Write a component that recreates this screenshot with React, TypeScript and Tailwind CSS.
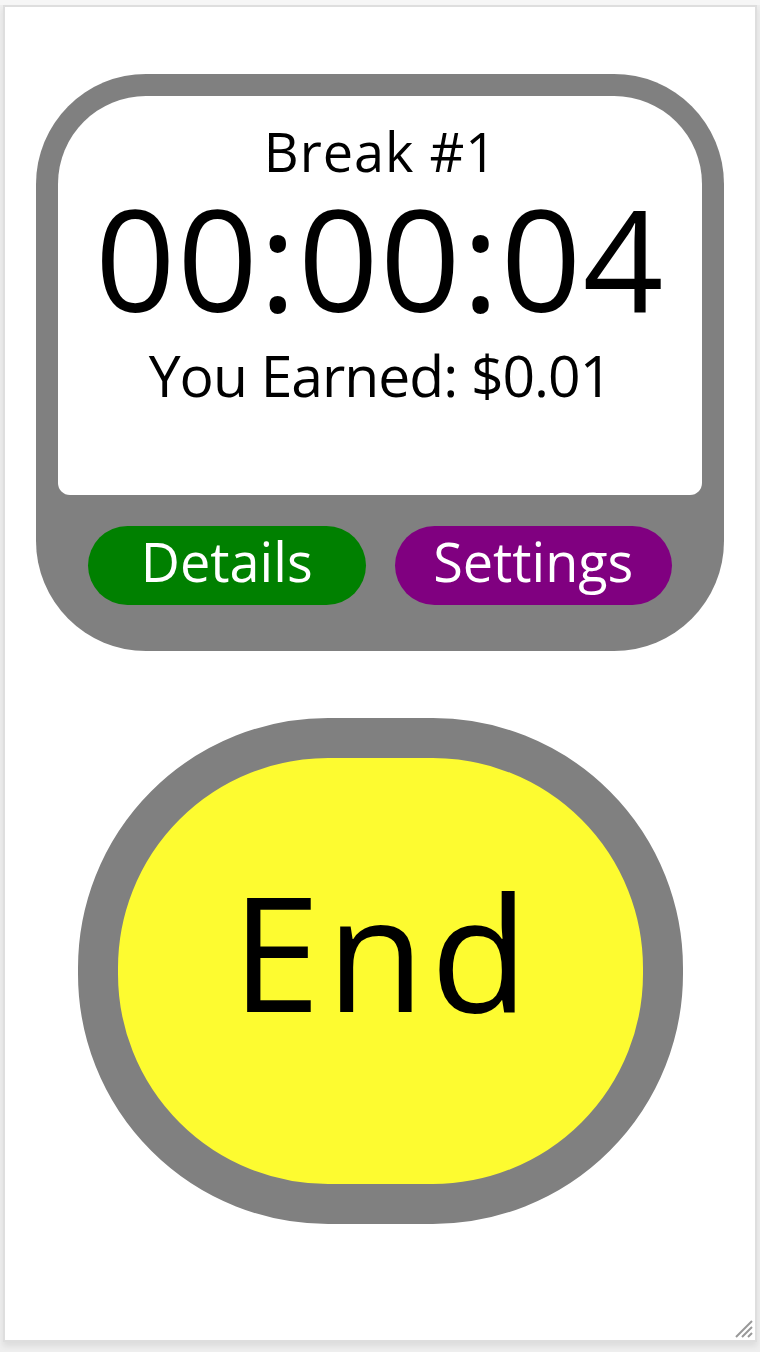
import React from 'react';

const font = { fontFamily: '"Open Sans", "Noto Sans", sans-serif' };

export default function App() {
  return (
    <div className="min-h-screen w-[760px] bg-[#eeeeee]" style={font}>
      {/* window chrome */}
      <div className="h-[5px] bg-[#f6f6f6]" />
      <div className="ml-[3px] w-[754px] h-[1337px] border-t-2 border-x-2 border-b-2 border-[#dedede] bg-white shadow-[0_4px_6px_rgba(0,0,0,0.08)] relative">
        <div className="flex flex-col items-center">
          {/* Timer card */}
          <div className="mt-[67px] w-[688px] rounded-[110px] bg-[#808080] p-[22px] pb-[46px]">
            <div className="h-[399px] bg-white rounded-t-[88px] rounded-b-[12px] flex flex-col items-center text-black">
              <div className="mt-[28px] text-[54px] leading-[54px] tracking-[1px] pl-[1px]">Break #1</div>
              <div className="mt-[9px] text-[141px] leading-[141px] tracking-[1.5px]">00:00:04</div>
              <div className="mt-[19px] text-[57px] leading-[57px] tracking-[-1px]">You Earned: $0.01</div>
            </div>
            <div className="mt-[31px] flex gap-[29px] px-[30px]">
              <button className="flex-1 h-[79px] pb-[9px] rounded-full bg-[#008000] text-white text-[54px] leading-none">
                Details
              </button>
              <button className="flex-1 h-[79px] pb-[9px] rounded-full bg-[#800080] text-white text-[54px] leading-none">
                Settings
              </button>
            </div>
          </div>

          {/* End button */}
          <button className="mt-[67px] w-[605px] h-[506px] rounded-[250px] border-[40px] border-[#808080] bg-[#fdfb30] text-black text-[160px] leading-none tracking-[6px] pl-[6px] pb-[42px] flex items-center justify-center">
            End
          </button>
        </div>

        {/* resize grip */}
        <svg className="absolute right-[2px] bottom-[2px]" width="22" height="22" viewBox="0 0 22 22">
          <path d="M21 5 L5 21 M21 11 L11 21 M21 17 L17 21" stroke="#999" strokeWidth="2" />
        </svg>
      </div>
    </div>
  );
}
